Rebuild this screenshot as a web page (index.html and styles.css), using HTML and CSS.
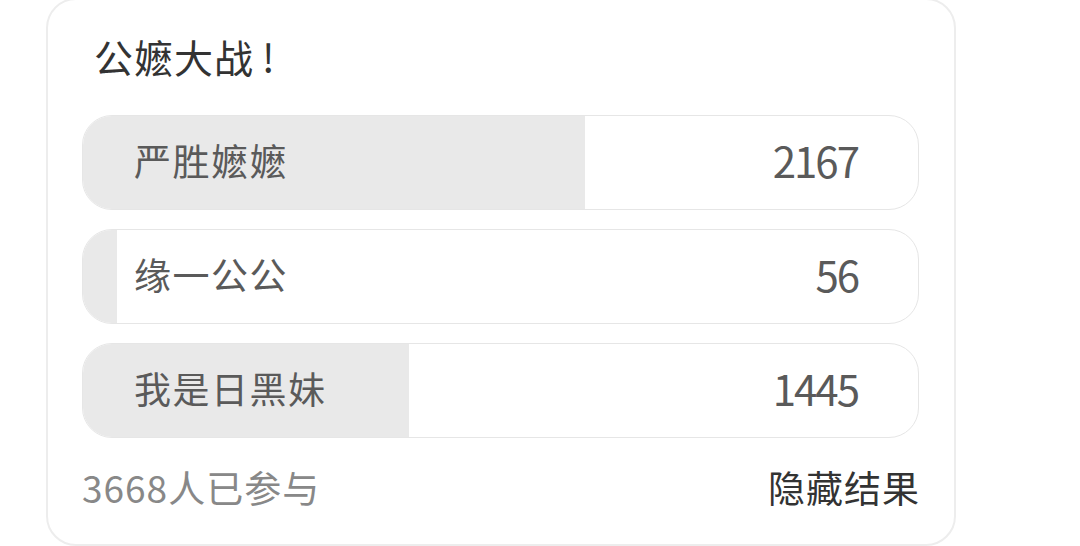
FILE: index.html
```html
<!DOCTYPE html>
<html lang="zh-CN">

<head>
    <meta charset="UTF-8">
    <meta name="viewport" content="width=device-width, initial-scale=1.0">
    <title>公嬷大战</title>
    <link rel="stylesheet" href="styles.css">
</head>

<body>
    <div class="card">
        <h2 class="title">公嬷大战<span class="bang">!</span></h2>
        <div class="options">
            <div class="option">
                <div class="fill" style="width: 60.1%"></div>
                <span class="label">严胜嬷嬷</span>
                <span class="count">2167</span>
            </div>
            <div class="option">
                <div class="fill" style="width: 4.1%"></div>
                <span class="label">缘一公公</span>
                <span class="count">56</span>
            </div>
            <div class="option">
                <div class="fill" style="width: 39.1%"></div>
                <span class="label">我是日黑妹</span>
                <span class="count">1445</span>
            </div>
        </div>
        <div class="footer">
            <span class="joined">3668人已参与</span>
            <span class="hide">隐藏结果</span>
        </div>
    </div>
</body>

</html>
```

FILE: styles.css
```css
body {
    margin: 0;
    padding: 0;
    background: #fff;
    font-family: "Noto Sans CJK SC", "Noto Sans", sans-serif;
    overflow: hidden;
}

.card {
    width: 910px;
    height: 548px;
    box-sizing: border-box;
    margin: -2px 0 0 46px;
    padding: 31px 35px 0 34px;
    border: 2px solid #ededed;
    border-radius: 30px;
}

.title {
    margin: 0 0 34px 12px;
    font-size: 39px;
    line-height: 50px;
    font-weight: 400;
    letter-spacing: 1px;
    color: #333;
}

.bang {
    margin-left: 8px;
}

.options {
    display: flex;
    flex-direction: column;
    gap: 19px;
}

.option {
    position: relative;
    display: flex;
    justify-content: space-between;
    align-items: center;
    height: 95px;
    box-sizing: border-box;
    padding: 0 60px 0 51px;
    border: 1px solid #e6e6e6;
    border-radius: 30px;
    overflow: hidden;
    color: #5a5a5a;
}

.fill {
    position: absolute;
    left: 0;
    top: 0;
    bottom: 0;
    background: #e9e9e9;
}

.label,
.count {
    position: relative;
    font-size: 37px;
    line-height: 1;
}

.label {
    letter-spacing: 1.5px;
    margin-bottom: 4px;
}

.count {
    font-size: 42px;
    letter-spacing: -2px;
    margin-bottom: 6px;
}

.footer {
    display: flex;
    justify-content: space-between;
    align-items: center;
    margin-top: 27px;
    font-size: 37px;
    line-height: 44px;
    letter-spacing: 1px;
}

.joined {
    color: #888;
}

.hide {
    color: #333;
    margin-right: -1px;
}
```
